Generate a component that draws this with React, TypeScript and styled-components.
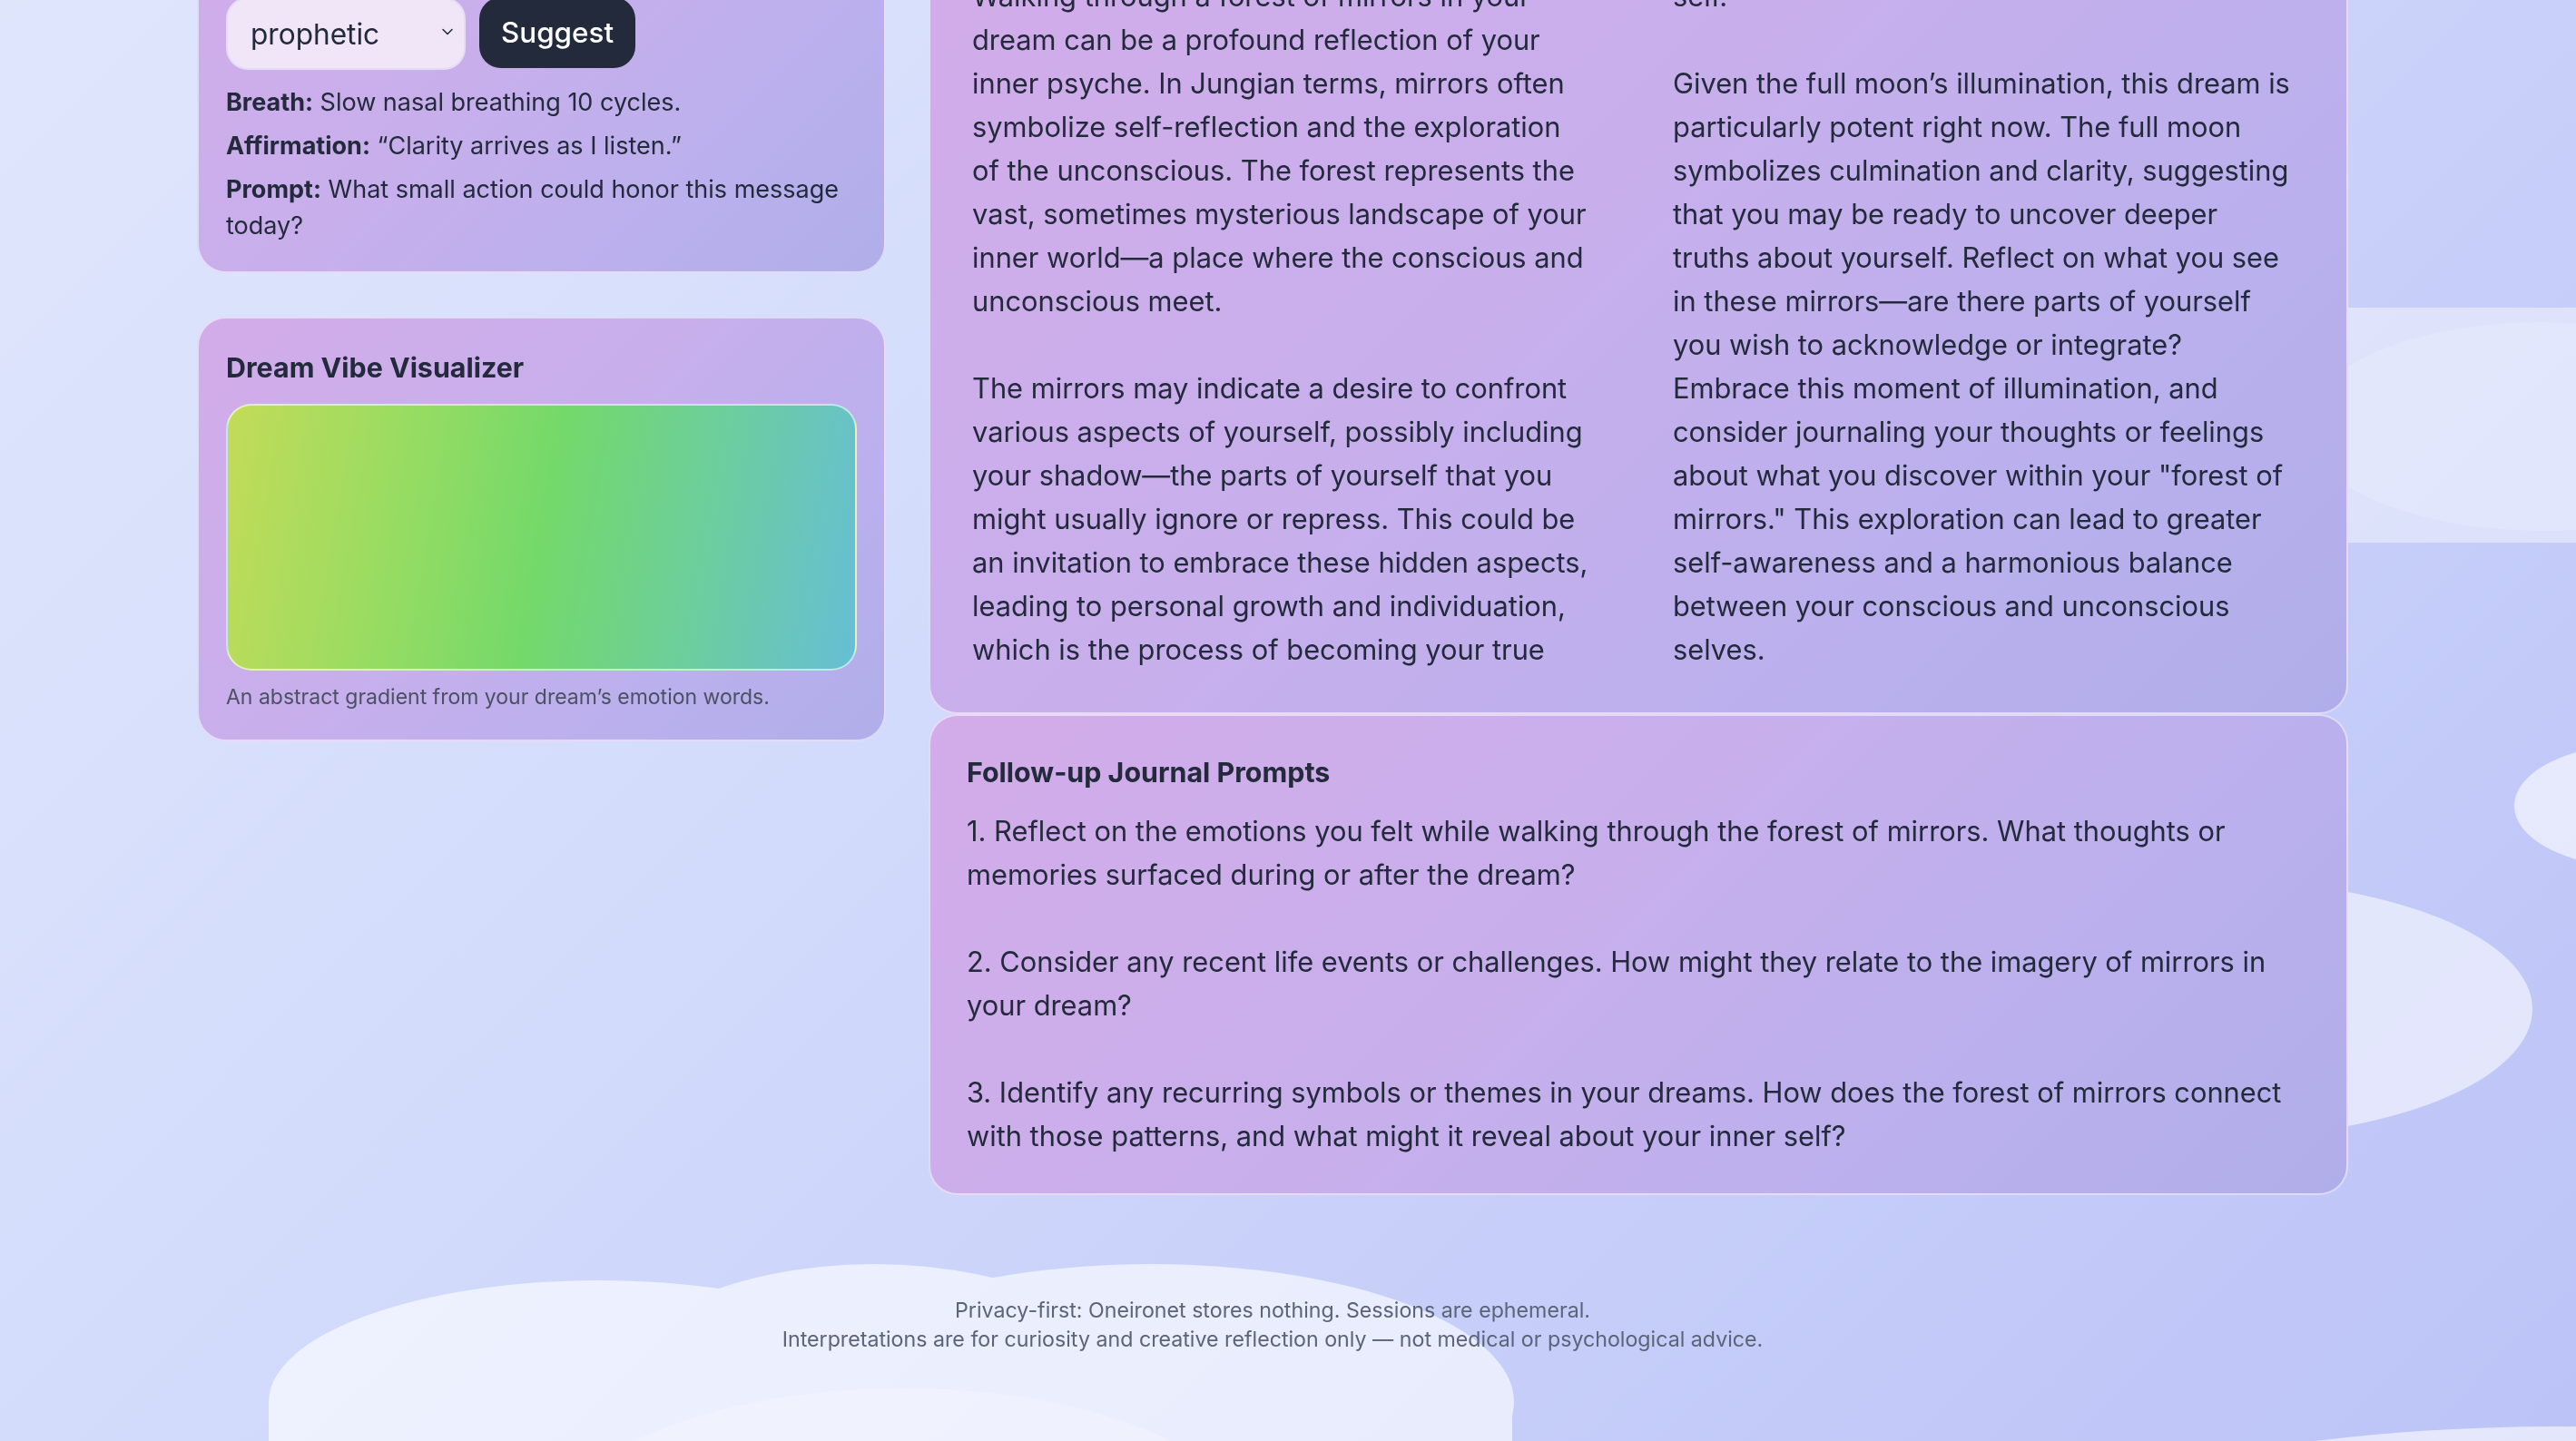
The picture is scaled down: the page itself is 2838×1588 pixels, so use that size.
import React from "react";
import styled, { createGlobalStyle } from "styled-components";

const GlobalStyle = createGlobalStyle`
  html, body {
    margin: 0;
    padding: 0;
    height: 100%;
    overflow: hidden;
  }
  body {
    font-family: Inter, "Noto Sans", sans-serif;
    color: #222a3b;
    background: linear-gradient(135deg, #dfe6fc 0%, #d2dbfb 40%, #c6cef9 70%, #bcc3f7 100%);
  }
  * { box-sizing: border-box; }
`;

const Sky = styled.svg`
  position: fixed;
  inset: 0;
  width: 100%;
  height: 100%;
  z-index: 0;
  pointer-events: none;
`;

const Shell = styled.div`
  position: relative;
  z-index: 1;
  padding-right: 34px;
`;

const Container = styled.main`
  max-width: 2370px;
  margin: 0 auto;
`;

const Layout = styled.div`
  display: grid;
  grid-template-columns: 759px 1fr;
  column-gap: 47px;
  align-items: start;
  margin-top: -147px;
`;

const Column = styled.div<{ $gap: number }>`
  display: flex;
  flex-direction: column;
  gap: ${(p) => p.$gap}px;
`;

const Card = styled.section<{ $pad: string }>`
  border: 2px solid rgba(255, 255, 255, 0.55);
  border-radius: 32px;
  padding: ${(p) => p.$pad};
  background: linear-gradient(135deg, #d3ace9 0%, #c7afec 45%, #bab0ed 75%, #b0aeea 100%);
`;

const CardTitle = styled.h2<{ $lh: number; $mb: number }>`
  margin: 0 0 ${(p) => p.$mb}px;
  font-size: 30.4px;
  font-weight: 700;
  line-height: ${(p) => p.$lh}px;
  color: #222a3b;
`;

const Intro = styled.p`
  margin: 8px 0 16px;
  font-size: 27px;
  line-height: 40px;
`;

const ControlRow = styled.div`
  display: flex;
  gap: 15px;
  margin-bottom: 16px;
`;

const SelectWrap = styled.div`
  position: relative;
  width: 264px;
  height: 80px;
`;

const Select = styled.select`
  appearance: none;
  width: 100%;
  height: 100%;
  padding: 0 48px 0 25px;
  font-family: Inter, sans-serif;
  font-size: 31.6px;
  color: #222a3b;
  background: #f0e6f8;
  border: 2px solid #e6dbf5;
  border-radius: 24px;
  outline: none;
`;

const Chevron = styled.svg`
  position: absolute;
  right: 12px;
  top: 30px;
  width: 16px;
  height: 16px;
  pointer-events: none;
`;

const Button = styled.button`
  height: 78px;
  padding: 0 24px;
  font-family: Inter, sans-serif;
  font-size: 31.4px;
  font-weight: 500;
  color: #ffffff;
  background: #222a3b;
  border: none;
  border-radius: 24px;
`;

const TipList = styled.ul`
  list-style: none;
  margin: 0;
  padding: 0;
  display: flex;
  flex-direction: column;
  gap: 8px;
`;

const Tip = styled.li`
  font-size: 27px;
  line-height: 40px;
`;

const Label = styled.strong`
  font-weight: 700;
`;

const Swatch = styled.div`
  height: 294px;
  border: 2px solid rgba(255, 255, 255, 0.6);
  border-radius: 28px;
  background: linear-gradient(100deg, #c3db58 0%, #97dc62 28%, #74d96a 50%, #6dcf98 72%, #66bed5 100%);
`;

const Caption = styled.p`
  margin: 12px 0 0;
  font-size: 23px;
  line-height: 34px;
  color: #4a5163;
`;

const Interp = styled.div`
  column-count: 2;
  column-gap: 90px;
  font-size: 30.8px;
  line-height: 48px;
  white-space: pre-line;
`;

const Prompts = styled.div`
  font-size: 30.8px;
  line-height: 48px;
  white-space: pre-line;
`;

const Footer = styled.footer`
  padding-top: 111px;
  text-align: center;
  color: #5b6478;
  font-size: 23.2px;
  line-height: 32px;
`;

const FooterLine = styled.p`
  margin: 0;
`;

const interpretation = `Walking through a forest of mirrors in your dream can be a profound reflection of your inner psyche. In Jungian terms, mirrors often symbolize self-reflection and the exploration of the unconscious. The forest represents the vast, sometimes mysterious landscape of your inner world—a place where the conscious and unconscious meet.

The mirrors may indicate a desire to confront various aspects of yourself, possibly including your shadow—the parts of yourself that you might usually ignore or repress. This could be an invitation to embrace these hidden aspects, leading to personal growth and individuation, which is the process of becoming your true self.

Given the full moon’s illumination, this dream is particularly potent right now. The full moon symbolizes culmination and clarity, suggesting that you may be ready to uncover deeper truths about yourself. Reflect on what you see in these mirrors—are there parts of yourself you wish to acknowledge or integrate? Embrace this moment of illumination, and consider journaling your thoughts or feelings about what you discover within your "forest of mirrors." This exploration can lead to greater self-awareness and a harmonious balance between your conscious and unconscious selves.`;

const prompts = `1. Reflect on the emotions you felt while walking through the forest of mirrors. What thoughts or memories surfaced during or after the dream?

2. Consider any recent life events or challenges. How might they relate to the imagery of mirrors in your dream?

3. Identify any recurring symbols or themes in your dreams. How does the forest of mirrors connect with those patterns, and what might it reveal about your inner self?`;

export default function App() {
  return (
    <>
      <GlobalStyle />
      <Sky viewBox="0 0 2838 1588" preserveAspectRatio="none" aria-hidden="true">
        <g fill="#ffffff" opacity="0.62">
          <ellipse cx="660" cy="1545" rx="364" ry="134" />
          <ellipse cx="963" cy="1545" rx="300" ry="152" />
          <ellipse cx="1268" cy="1545" rx="400" ry="152" />
          <rect x="296" y="1545" width="1370" height="60" />
        </g>
        <ellipse cx="995" cy="1700" rx="393" ry="170" fill="#ffffff" opacity="0.22" />
        <rect x="2300" y="339" width="640" height="259" rx="40" fill="#ffffff" opacity="0.42" />
        <ellipse cx="2800" cy="470" rx="260" ry="115" fill="#ffffff" opacity="0.15" />
        <ellipse cx="2440" cy="1112" rx="350" ry="142" fill="#ffffff" opacity="0.55" />
        <ellipse cx="2905" cy="888" rx="135" ry="68" fill="#ffffff" opacity="0.6" />
        <ellipse cx="2820" cy="1722" rx="600" ry="150" fill="#ffffff" opacity="0.6" />
      </Sky>
      <Shell>
        <Container>
          <Layout>
            <Column $gap={48}>
              <Card $pad="30px">
                <CardTitle $lh={48} $mb={0}>Ritual Suggestion</CardTitle>
                <Intro>Pick a tone for a tiny practice.</Intro>
                <ControlRow>
                  <SelectWrap>
                    <Select defaultValue="prophetic" aria-label="Tone">
                      <option value="gentle">gentle</option>
                      <option value="prophetic">prophetic</option>
                      <option value="playful">playful</option>
                    </Select>
                    <Chevron viewBox="0 0 16 16" fill="none" stroke="#222a3b" strokeWidth="1.5" strokeLinecap="round" strokeLinejoin="round">
                      <path d="M3 5.5 L8 10.5 L13 5.5" />
                    </Chevron>
                  </SelectWrap>
                  <Button type="button">Suggest</Button>
                </ControlRow>
                <TipList>
                  <Tip><Label>Breath:</Label> Slow nasal breathing 10 cycles.</Tip>
                  <Tip><Label>Affirmation:</Label> “Clarity arrives as I listen.”</Tip>
                  <Tip><Label>Prompt:</Label> What small action could honor this message today?</Tip>
                </TipList>
              </Card>
              <Card $pad="30px">
                <CardTitle $lh={48} $mb={16}>Dream Vibe Visualizer</CardTitle>
                <Swatch />
                <Caption>An abstract gradient from your dream’s emotion words.</Caption>
              </Card>
            </Column>
            <Column $gap={0}>
              <Card $pad="46px 60px 45px 46px">
                <CardTitle $lh={48} $mb={23}>Interpretation</CardTitle>
                <Interp>{interpretation}</Interp>
              </Card>
              <Card $pad="40px 40px 39px">
                <CardTitle $lh={44} $mb={19}>Follow-up Journal Prompts</CardTitle>
                <Prompts>{prompts}</Prompts>
              </Card>
            </Column>
          </Layout>
          <Footer>
            <FooterLine>Privacy-first: Oneironet stores nothing. Sessions are ephemeral.</FooterLine>
            <FooterLine>Interpretations are for curiosity and creative reflection only — not medical or psychological advice.</FooterLine>
          </Footer>
        </Container>
      </Shell>
    </>
  );
}
